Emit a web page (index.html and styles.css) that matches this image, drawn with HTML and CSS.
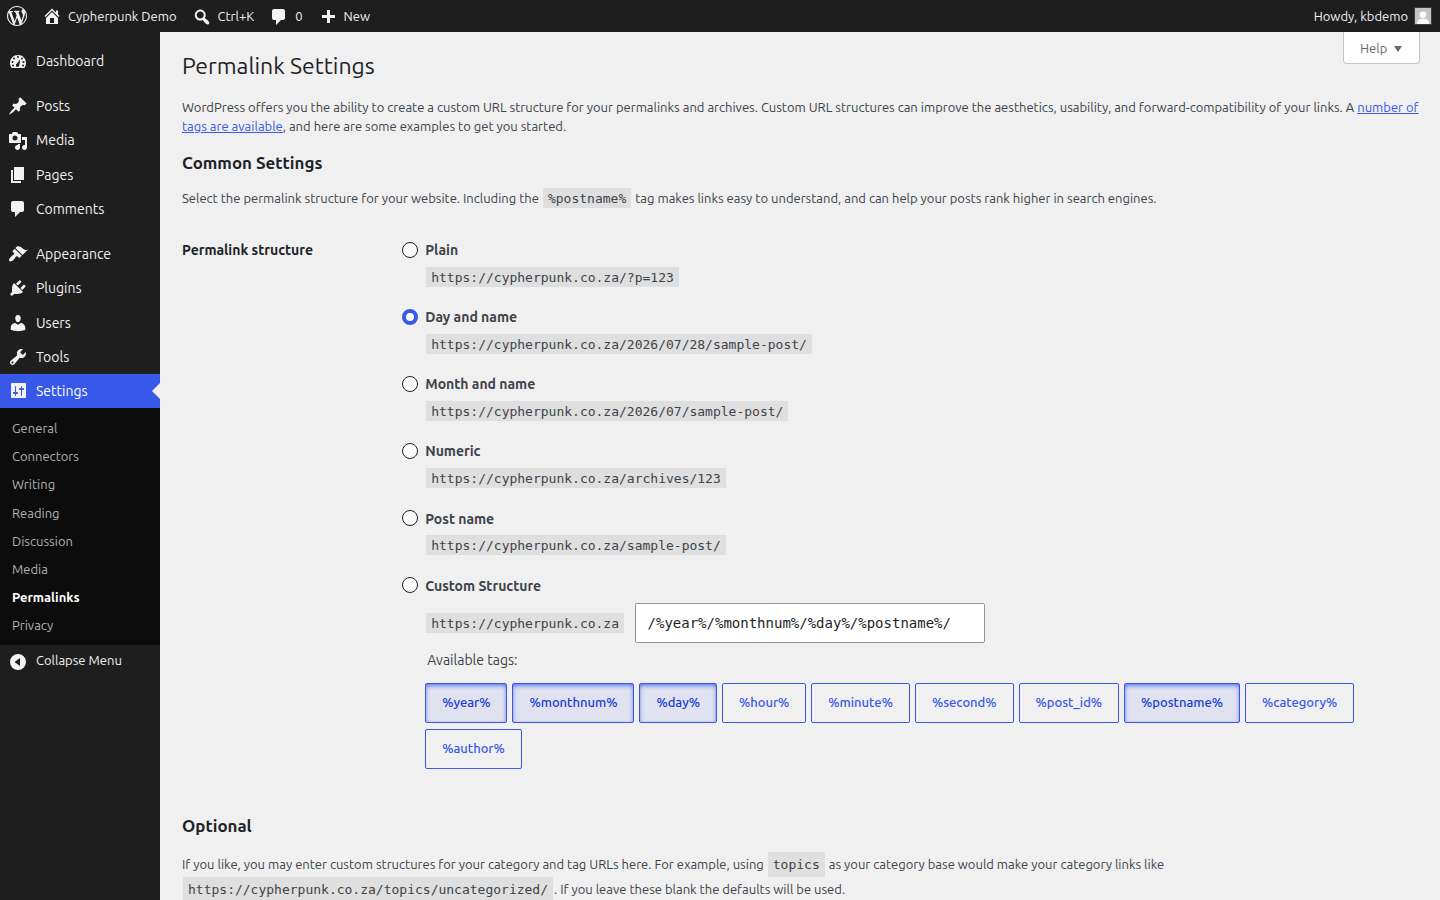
FILE: index.html
```html
<!DOCTYPE html>
<html lang="en">
<head>
  <meta charset="UTF-8">
  <meta name="viewport" content="width=device-width, initial-scale=1.0">
  <title>Permalink Settings</title>
  <link rel="stylesheet" href="styles.css">
</head>
<body>

  <header class="adminbar">
    <a class="bar-item logo" href="#">
      <svg class="icon" viewBox="0 0 20 20"><path d="M20 10c0-5.51-4.49-10-10-10C4.48 0 0 4.49 0 10c0 5.52 4.48 10 10 10 5.51 0 10-4.48 10-10zM7.78 15.37L4.37 6.22c.55-.02 1.17-.08 1.17-.08.5-.06.44-1.13-.06-1.11 0 0-1.45.11-2.37.11-.18 0-.37 0-.58-.01C4.12 2.69 6.87 1.11 10 1.11c2.33 0 4.45.87 6.05 2.34-.68-.11-1.65.39-1.65 1.58 0 .74.45 1.36.9 2.1.35.61.55 1.36.55 2.46 0 1.49-1.4 5-1.4 5l-3.03-8.37c.54-.02.82-.17.82-.17.5-.05.44-1.25-.06-1.22 0 0-1.44.12-2.38.12-.87 0-2.33-.12-2.33-.12-.5-.03-.56 1.2-.06 1.22l.92.08 1.26 3.41zM17.41 10c.24-.64.74-1.87.43-4.25.7 1.29 1.05 2.71 1.05 4.25 0 3.29-1.73 6.24-4.4 7.78.97-2.59 1.94-5.2 2.92-7.78zM6.1 18.09C3.12 16.65 1.11 13.53 1.11 10c0-1.3.23-2.48.72-3.59C3.25 10.3 4.67 14.2 6.1 18.09zm4.03-6.63l2.58 6.98c-.86.29-1.76.45-2.71.45-.79 0-1.57-.11-2.29-.33.81-2.38 1.62-4.74 2.42-7.1z"/></svg>
    </a>
    <a class="bar-item" href="#">
      <svg class="icon" viewBox="0 0 20 20"><path fill-rule="evenodd" d="M16 8.5l1.53 1.53-1.06 1.06L10 4.6l-6.47 6.49-1.06-1.06L10 2.5l4 4v-2h2v4zm-6-2.46l6 5.99V18H4v-5.97zM12 17v-5H8v5h4z"/></svg>
      Cypherpunk Demo
    </a>
    <a class="bar-item low" href="#">
      <svg class="icon" viewBox="0 0 20 20"><path d="M12.14 4.18c1.87 1.87 2.11 4.75.72 6.89.12.1.22.21.36.31.2.16.47.36.81.59.34.24.56.39.66.47.42.31.73.57.94.78.32.32.6.65.84 1 .25.35.44.69.59 1.04.14.35.21.68.18 1-.02.32-.14.59-.36.81s-.49.34-.81.36c-.31.02-.65-.04-.99-.19-.35-.14-.7-.34-1.04-.59-.35-.24-.68-.52-1-.84-.21-.21-.47-.52-.77-.93-.1-.13-.25-.35-.47-.66-.22-.32-.4-.57-.56-.78-.16-.2-.29-.35-.44-.5-2.07 1.09-4.69.76-6.44-.98-2.14-2.15-2.14-5.64 0-7.78 2.15-2.15 5.63-2.15 7.78 0zm-1.41 6.36c1.36-1.37 1.36-3.58 0-4.95-1.37-1.37-3.59-1.37-4.95 0-1.37 1.37-1.37 3.58 0 4.95 1.36 1.37 3.58 1.37 4.95 0z"/></svg>
      Ctrl+K
    </a>
    <a class="bar-item low" href="#">
      <svg class="icon" viewBox="0 0 20 20"><path d="M5 2h9c1.1 0 2 .9 2 2v7c0 1.1-.9 2-2 2h-2l-5 5v-5H5c-1.1 0-2-.9-2-2V4c0-1.1.9-2 2-2z"/></svg>
      0
    </a>
    <a class="bar-item lower" href="#">
      <svg class="icon" viewBox="0 0 20 20"><path d="M17 7v3h-5v5H9v-5H4V7h5V2h3v5h5z"/></svg>
      New
    </a>
    <a class="bar-item account" href="#">
      Howdy, kbdemo
      <svg class="avatar" viewBox="0 0 16 16"><rect width="16" height="16" fill="#c3c3c3"/><circle cx="8" cy="6.8" r="3.3" fill="#fff"/><path fill="#fff" d="M2 16c0-3 1.5-5 4-5.200h4c2.500.2 4 2.200 4 5.200z"/></svg>
    </a>
  </header>

  <div class="layout">
    <nav class="sidebar">
      <a class="menu-item" href="#">
        <svg class="icon" viewBox="0 0 20 20"><path fill-rule="evenodd" d="M3.760 17h12.480c1.090-1.420 1.760-3.180 1.760-5.120C18 7.500 14.420 4 10 4s-8 3.500-8 7.880c0 1.940.66 3.700 1.760 5.120zM10 5a1 1 0 1 1 0 2a1 1 0 0 1 0-2zM6 6.500a1 1 0 1 1 0 2a1 1 0 0 1 0-2zM14 6.500a1 1 0 1 1 0 2a1 1 0 0 1 0-2zM4.500 10a1 1 0 1 1 0 2a1 1 0 0 1 0-2zM15.500 10a1 1 0 1 1 0 2a1 1 0 0 1 0-2zM12.200 8.200l-.9 5.700a1.700 1.700 0 1 1-2.300-1.300zM5 13.500a1 1 0 1 1 0 2a1 1 0 0 1 0-2zM15 13.500a1 1 0 1 1 0 2a1 1 0 0 1 0-2z"/></svg>
        Dashboard
      </a>
      <div class="separator"></div>
      <a class="menu-item" href="#">
        <svg class="icon" viewBox="0 0 20 20"><path d="M10.44 3.02l1.82-1.82 6.36 6.35-1.83 1.82c-1.05-.68-2.48-.57-3.41.36l-.75.75c-.92.93-1.04 2.35-.35 3.41l-1.83 1.82-2.41-2.41-2.8 2.79c-.42.42-3.38 2.71-3.8 2.29s1.86-3.39 2.28-3.81l2.79-2.79L4.1 9.36l1.83-1.82c1.05.69 2.48.57 3.4-.36l.75-.75c.93-.92 1.05-2.35.36-3.41z"/></svg>
        Posts
      </a>
      <a class="menu-item" href="#">
        <svg class="icon" viewBox="0 0 20 20"><path fill-rule="evenodd" d="M13 11V4c0-.55-.45-1-1-1h-1.67L9 1H5L3.67 3H2c-.55 0-1 .45-1 1v7c0 .55.45 1 1 1h10c.55 0 1-.45 1-1zM7 4.5c1.38 0 2.5 1.12 2.5 2.5S8.38 9.5 7 9.5 4.5 8.38 4.5 7 5.620 4.5 7 4.5zM14 6h5v10.5c0 1.38-1.12 2.5-2.5 2.5S14 17.88 14 16.5s1.12-2.5 2.5-2.5c.17 0 .34.02.5.05V9h-3V6zm-4 8.05V13h2v3.5c0 1.38-1.12 2.5-2.5 2.5S7 17.88 7 16.5 8.12 14 9.5 14c.17 0 .34.02.5.05z"/></svg>
        Media
      </a>
      <a class="menu-item" href="#">
        <svg class="icon" viewBox="0 0 20 20"><path d="M6 15V2h10v13H6zm-1 1h8v2H3V5h2v11z"/></svg>
        Pages
      </a>
      <a class="menu-item" href="#">
        <svg class="icon" viewBox="0 0 20 20"><path d="M5 2h9c1.1 0 2 .9 2 2v7c0 1.1-.9 2-2 2h-2l-5 5v-5H5c-1.1 0-2-.9-2-2V4c0-1.1.9-2 2-2z"/></svg>
        Comments
      </a>
      <div class="separator"></div>
      <a class="menu-item" href="#">
        <svg class="icon" viewBox="0 0 20 20"><path d="M14.48 11.06L7.41 3.99l1.5-1.5c.5-.56 2.3-.47 3.51.32 1.21.8 1.43 1.28 2.91 2.1 1.18.64 2.45 1.26 4.45.85zm-.71.71L6.7 4.7 4.93 6.47c-.39.39-.39 1.02 0 1.41l1.06 1.06c.39.39.39 1.03 0 1.42-.6.6-1.43 1.11-2.21 1.69-.35.26-.7.53-1.01.84C1.43 14.23.4 16.08 1.4 17.07c.99 1 2.84-.03 4.18-1.36.31-.31.58-.66.85-1.02.57-.78 1.08-1.61 1.69-2.21.39-.39 1.02-.39 1.41 0l1.06 1.06c.39.39 1.02.39 1.41 0z"/></svg>
        Appearance
      </a>
      <a class="menu-item" href="#">
        <svg class="icon" viewBox="0 0 20 20"><path d="M13.11 4.36L9.87 7.6 8 5.73l3.24-3.24c.35-.34 1.05-.2 1.56.32.52.51.66 1.21.31 1.55zm-8 1.77l.91-1.12 9.01 9.01-1.19.84c-.71.71-2.63 1.16-3.82 1.16H6.14L4.9 17.26c-.59.59-1.54.59-2.12 0-.59-.58-.59-1.53 0-2.12l1.24-1.24v-3.88c0-1.13.4-3.19 1.09-3.89zm7.26 3.97l3.24-3.24c.34-.35 1.04-.21 1.55.31.52.51.66 1.21.31 1.55l-3.24 3.25z"/></svg>
        Plugins
      </a>
      <a class="menu-item" href="#">
        <svg class="icon" viewBox="0 0 20 20"><path d="M10 9.25c-2.27 0-2.73-3.44-2.73-3.44C7 4.02 7.82 2 9.97 2c2.16 0 2.98 2.02 2.71 3.81 0 0-.41 3.44-2.68 3.44zm0 2.57L12.72 10c2.39 0 4.52 2.33 4.52 4.53v2.49s-3.65 1.13-7.24 1.13c-3.65 0-7.24-1.13-7.24-1.13v-2.49c0-2.25 1.94-4.48 4.47-4.48z"/></svg>
        Users
      </a>
      <a class="menu-item" href="#">
        <svg class="icon" viewBox="0 0 20 20"><path fill-rule="evenodd" d="M16.68 9.77c-1.34 1.34-3.3 1.67-4.95.99l-5.41 6.52c-.99.99-2.59.99-3.58 0s-.99-2.59 0-3.57l6.52-5.42c-.68-1.65-.35-3.61.99-4.95 1.28-1.28 3.12-1.62 4.72-1.06l-2.89 2.89 2.82 2.82 2.86-2.87c.53 1.58.18 3.39-1.08 4.65zM3.81 16.21c.4.39 1.04.39 1.43 0 .4-.4.4-1.04 0-1.43-.39-.4-1.03-.4-1.43 0-.39.39-.39 1.03 0 1.43z"/></svg>
        Tools
      </a>
      <a class="menu-item current" href="#">
        <svg class="icon" viewBox="0 0 20 20"><path fill-rule="evenodd" d="M18 16V3c0-.55-.45-1-1-1H4c-.55 0-1 .45-1 1v13c0 .55.45 1 1 1h13c.55 0 1-.45 1-1zM8 11h1c.55 0 1 .45 1 1s-.45 1-1 1H8v1.500c0 .28-.22.5-.5.5s-.5-.22-.5-.5V13H6c-.55 0-1-.45-1-1s.45-1 1-1h1V5.500c0-.28.22-.5.5-.5s.5.22.5.5V11zM14 9v5.500c0 .28-.22.5-.5.5s-.5-.22-.5-.5V9h-1c-.55 0-1-.45-1-1s.45-1 1-1h1V5.500c0-.28.22-.5.5-.5s.5.22.5.5V7h1c.55 0 1 .45 1 1s-.45 1-1 1h-1z"/></svg>
        Settings
      </a>
      <div class="submenu">
        <a href="#">General</a>
        <a href="#">Connectors</a>
        <a href="#">Writing</a>
        <a href="#">Reading</a>
        <a href="#">Discussion</a>
        <a href="#">Media</a>
        <a class="active" href="#">Permalinks</a>
        <a href="#">Privacy</a>
      </div>
      <a class="menu-item collapse" href="#">
        <svg class="icon" viewBox="0 0 20 20"><path fill-rule="evenodd" d="M10 2a8 8 0 1 0 0 16a8 8 0 0 0 0-16zM12 6v8l-5.500-4z"/></svg>
        <span>Collapse Menu</span>
      </a>
    </nav>

    <main class="content">
      <button class="help" type="button">Help <span class="caret"></span></button>

      <h1>Permalink Settings</h1>
      <p>WordPress offers you the ability to create a custom URL structure for your permalinks and archives. Custom URL structures can improve the aesthetics, usability, and forward-compatibility of your links. A <a href="#">number of tags are available</a>, and here are some examples to get you started.</p>

      <h2>Common Settings</h2>
      <p>Select the permalink structure for your website. Including the <code>%postname%</code> tag makes links easy to understand, and can help your posts rank higher in search engines.</p>

      <form class="form-row">
        <div class="form-label">Permalink structure</div>
        <div class="options">
          <div class="option">
            <input type="radio" name="structure" id="plain">
            <label for="plain">Plain</label>
            <div class="example"><code>https://cypherpunk.co.za/?p=123</code></div>
          </div>
          <div class="option">
            <input type="radio" name="structure" id="day" checked>
            <label for="day">Day and name</label>
            <div class="example"><code>https://cypherpunk.co.za/2026/07/28/sample-post/</code></div>
          </div>
          <div class="option">
            <input type="radio" name="structure" id="month">
            <label for="month">Month and name</label>
            <div class="example"><code>https://cypherpunk.co.za/2026/07/sample-post/</code></div>
          </div>
          <div class="option">
            <input type="radio" name="structure" id="numeric">
            <label for="numeric">Numeric</label>
            <div class="example"><code>https://cypherpunk.co.za/archives/123</code></div>
          </div>
          <div class="option">
            <input type="radio" name="structure" id="postname">
            <label for="postname">Post name</label>
            <div class="example"><code>https://cypherpunk.co.za/sample-post/</code></div>
          </div>
          <div class="option">
            <input type="radio" name="structure" id="custom">
            <label for="custom">Custom Structure</label>
            <div class="custom">
              <code>https://cypherpunk.co.za</code>
              <input type="text" value="/%year%/%monthnum%/%day%/%postname%/">
            </div>
            <div class="tags-title">Available tags:</div>
            <div class="tags">
              <button type="button" class="tag active">%year%</button>
              <button type="button" class="tag active">%monthnum%</button>
              <button type="button" class="tag active">%day%</button>
              <button type="button" class="tag">%hour%</button>
              <button type="button" class="tag">%minute%</button>
              <button type="button" class="tag">%second%</button>
              <button type="button" class="tag">%post_id%</button>
              <button type="button" class="tag active">%postname%</button>
              <button type="button" class="tag">%category%</button>
              <button type="button" class="tag">%author%</button>
            </div>
          </div>
        </div>
      </form>

      <h2 class="optional">Optional</h2>
      <p class="optional-text">If you like, you may enter custom structures for your category and tag URLs here. For example, using <code>topics</code> as your category base would make your category links like <code>https://cypherpunk.co.za/topics/uncategorized/</code>. If you leave these blank the defaults will be used.</p>
    </main>
  </div>

</body>
</html>
```
FILE: styles.css
```css
:root {
  --bg: #f0f0f0;
  --dark: #1e1e1e;
  --blue: #3858e9;
  --text: #3c434a;
  --heading: #1d2327;
}

* {
  box-sizing: border-box;
}

body {
  margin: 0;
  height: 100vh;
  overflow: hidden;
  background: var(--bg);
  color: var(--text);
  font-family: Ubuntu, "Noto Sans", sans-serif;
  font-size: 13px;
  line-height: 1.5;
}

.icon {
  width: 20px;
  height: 20px;
  flex: none;
  fill: #f3f1f1;
}

/* Top bar */
.adminbar {
  display: flex;
  height: 32px;
  background: var(--dark);
}

.bar-item {
  display: flex;
  align-items: center;
  gap: 6px;
  padding: 0 8px 0 7px;
  line-height: 32px;
  color: #f0f0f1;
  text-decoration: none;
}

.bar-item.low .icon {
  margin-top: 2px;
}

.bar-item.lower .icon {
  margin-top: 4px;
}

.account {
  margin-left: auto;
}

.avatar {
  width: 18px;
  height: 18px;
  border: 1px solid #3c3c3c;
}

/* Left menu */
.layout {
  display: flex;
  height: calc(100vh - 32px);
}

.sidebar {
  width: 160px;
  flex: none;
  padding-top: 12px;
  background: var(--dark);
}

.menu-item {
  position: relative;
  display: flex;
  align-items: center;
  gap: 8px;
  height: 34.22px;
  padding-left: 8px;
  font-size: 14px;
  line-height: 18.2px;
  color: #f0f0f1;
  text-decoration: none;
}

.separator {
  height: 11px;
}

.menu-item.current {
  background: var(--blue);
  color: #fff;
}

.menu-item.current::after {
  content: "";
  position: absolute;
  right: 0;
  top: 9px;
  border: 8px solid transparent;
  border-left: 0;
  border-right-color: var(--bg);
}

.submenu {
  padding: 5.8px 0 5px;
  background: #0c0c0c;
}

.submenu a {
  display: block;
  padding: 5px 12px;
  line-height: 18.2px;
  color: #b0b0b0;
  text-decoration: none;
}

.submenu a.active {
  color: #fff;
  font-weight: 600;
}

.menu-item.collapse {
  font-size: 13px;
}

.collapse span {
  margin-top: -2.5px;
}

/* Page */
.content {
  position: relative;
  flex: 1;
  padding: 10px 20px 0 22px;
}

.help {
  position: absolute;
  top: 0;
  right: 20px;
  display: flex;
  align-items: center;
  gap: 7px;
  width: 77px;
  height: 32px;
  padding: 2px 15px 0 16px;
  border: 1px solid #c3c4c7;
  border-top: 0;
  border-radius: 0 0 4px 4px;
  background: #fff;
  color: #646970;
  font: inherit;
}

.caret {
  border: 4px solid transparent;
  border-top: 6px solid #646970;
  border-bottom: 0;
}

h1 {
  margin: 0;
  padding: 9px 0 4px;
  color: var(--heading);
  font-size: 23px;
  font-weight: 400;
  line-height: 1.3;
}

h2 {
  margin: 15px 0;
  color: var(--heading);
  font-size: 16.9px;
  font-weight: 600;
  line-height: 22px;
}

p {
  margin: 13px 0;
}

a {
  color: var(--blue);
}

code {
  margin: 0 1px;
  padding: 3px 5px 2px;
  background: rgba(0, 0, 0, 0.07);
  font-family: "DejaVu Sans Mono", monospace;
  font-size: 13px;
}

.form-row {
  display: flex;
  margin-top: 31.8px;
  font-size: 14px;
  line-height: 20px;
}

.form-label {
  width: 220px;
  flex: none;
  color: var(--heading);
  font-weight: 600;
}

.options {
  flex: 1;
}

.option {
  display: grid;
  grid-template-columns: 23.2px 1fr;
  row-gap: 6.8px;
  margin-bottom: 19.3px;
}

.option label {
  font-weight: 600;
}

.option input[type="radio"] {
  appearance: none;
  width: 16px;
  height: 16px;
  margin: 1.6px 0 0;
  border: 1px solid var(--dark);
  border-radius: 50%;
  background: #fff;
}

.option input[type="radio"]:checked {
  border: 4px solid var(--blue);
}

.example,
.custom,
.tags-title,
.tags {
  grid-column: 2;
}

.custom {
  display: flex;
  align-items: center;
  margin-top: 0.3px;
}

.custom code {
  line-height: 15px;
}

.custom input {
  width: 350px;
  height: 40px;
  margin-left: 10px;
  padding: 0 11.5px;
  border: 1px solid #949494;
  border-radius: 2px;
  background: #fff;
  color: var(--dark);
  font: 14px "DejaVu Sans Mono", monospace;
}

.tags-title {
  padding-left: 2px;
}

.tags {
  display: flex;
  flex-wrap: wrap;
  gap: 6px 5px;
  margin-top: 6.6px;
}

.tag {
  height: 40px;
  padding: 0 16px 2px;
  border: 1px solid var(--blue);
  border-radius: 2px;
  background: transparent;
  color: var(--blue);
  font: inherit;
  font-size: 13px;
  font-weight: 500;
}

.tag.active {
  background: #e0e2ef;
  color: #183ad6;
  box-shadow: inset 0 2px 5px -1px var(--blue);
}

h2.optional {
  margin: 26.3px 0 15px;
}

.optional-text {
  max-width: 1000px;
  line-height: 25px;
}

.optional-text code {
  padding: 5px;
}
```
